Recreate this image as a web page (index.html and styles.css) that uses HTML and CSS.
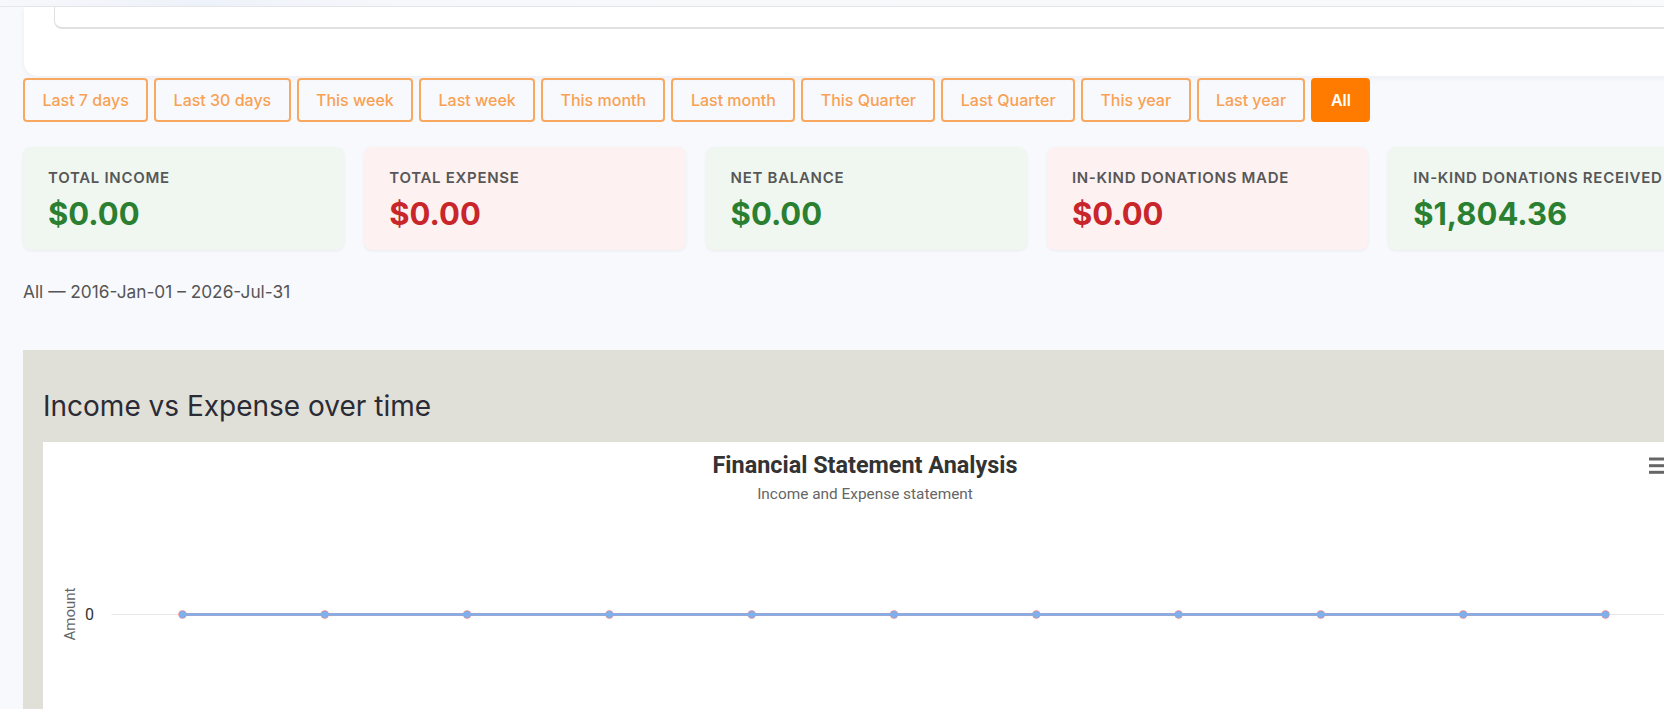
FILE: index.html
```html
<!DOCTYPE html>
<html>
<head>
	<title>Financial Report</title>
	<link rel="stylesheet" href="styles.css">
</head>
<body>
	<div class="topbar"></div>

	<div class="page">
		<div class="filter-card">
			<div class="search-box"></div>
		</div>

		<div class="ranges">
			<button class="range-btn">Last 7 days</button>
			<button class="range-btn">Last 30 days</button>
			<button class="range-btn">This week</button>
			<button class="range-btn">Last week</button>
			<button class="range-btn">This month</button>
			<button class="range-btn">Last month</button>
			<button class="range-btn">This Quarter</button>
			<button class="range-btn">Last Quarter</button>
			<button class="range-btn">This year</button>
			<button class="range-btn">Last year</button>
			<button class="range-btn active">All</button>
		</div>

		<div class="stats">
			<div class="stat income">
				<div class="stat-label">Total Income</div>
				<div class="stat-value">$0.00</div>
			</div>
			<div class="stat expense">
				<div class="stat-label">Total Expense</div>
				<div class="stat-value">$0.00</div>
			</div>
			<div class="stat income">
				<div class="stat-label">Net Balance</div>
				<div class="stat-value">$0.00</div>
			</div>
			<div class="stat expense">
				<div class="stat-label">In-Kind Donations Made</div>
				<div class="stat-value">$0.00</div>
			</div>
			<div class="stat income">
				<div class="stat-label">In-Kind Donations Received</div>
				<div class="stat-value">$1,804.36</div>
			</div>
		</div>

		<p class="range-text">All — 2016-Jan-01 – 2026-Jul-31</p>

		<div class="chart-panel">
			<h2>Income vs Expense over time</h2>
			<div class="chart">
				<svg class="chart-svg" width="1644" height="400" viewBox="0 0 1644 400">
					<text class="chart-title" x="822" y="31" text-anchor="middle">Financial Statement Analysis</text>
					<text class="chart-subtitle" x="822" y="57" text-anchor="middle">Income and Expense statement</text>

					<!-- export menu -->
					<g class="menu-icon">
						<line x1="1606" y1="17" x2="1622" y2="17"/>
						<line x1="1606" y1="23.7" x2="1622" y2="23.7"/>
						<line x1="1606" y1="30.3" x2="1622" y2="30.3"/>
					</g>

					<text class="axis-title" transform="translate(31.5,172) rotate(-90)" text-anchor="middle">Amount</text>
					<text class="axis-label" x="51" y="178" text-anchor="end">0</text>
					<line class="grid" x1="68.5" y1="172.5" x2="1634" y2="172.5"/>

					<!-- expense series -->
					<polyline class="line-expense" points="139.5,172.5 1562.5,172.5"/>
					<g class="dots-expense">
						<circle cx="139.5" cy="172.5" r="4.2"/>
						<circle cx="281.8" cy="172.5" r="4.2"/>
						<circle cx="424.1" cy="172.5" r="4.2"/>
						<circle cx="566.4" cy="172.5" r="4.2"/>
						<circle cx="708.7" cy="172.5" r="4.2"/>
						<circle cx="851" cy="172.5" r="4.2"/>
						<circle cx="993.3" cy="172.5" r="4.2"/>
						<circle cx="1135.6" cy="172.5" r="4.2"/>
						<circle cx="1277.9" cy="172.5" r="4.2"/>
						<circle cx="1420.2" cy="172.5" r="4.2"/>
						<circle cx="1562.5" cy="172.5" r="4.2"/>
					</g>

					<!-- income series -->
					<polyline class="line-income" points="139.5,172.5 1562.5,172.5"/>
					<g class="dots-income">
						<circle cx="139.5" cy="172.5" r="3.5"/>
						<circle cx="281.8" cy="172.5" r="3.5"/>
						<circle cx="424.1" cy="172.5" r="3.5"/>
						<circle cx="566.4" cy="172.5" r="3.5"/>
						<circle cx="708.7" cy="172.5" r="3.5"/>
						<circle cx="851" cy="172.5" r="3.5"/>
						<circle cx="993.3" cy="172.5" r="3.5"/>
						<circle cx="1135.6" cy="172.5" r="3.5"/>
						<circle cx="1277.9" cy="172.5" r="3.5"/>
						<circle cx="1420.2" cy="172.5" r="3.5"/>
						<circle cx="1562.5" cy="172.5" r="3.5"/>
					</g>
				</svg>
			</div>
		</div>
	</div>
</body>
</html>
```

FILE: styles.css
```css
html,
body {
	margin: 0;
	overflow: hidden;
}

body {
	font-family: Inter, "Noto Sans", sans-serif;
	background-color: #f8f9fd;
	color: #333;
}

.topbar {
	height: 6px;
	background: linear-gradient(to right, #f7f8fb, #eef2fa 12%, #f7f8fb 25%, #f9fafc);
	border-bottom: 1px solid #e6e7eb;
}

.page {
	width: 1690px;
	padding-left: 23px;
}

.filter-card {
	height: 69px;
	margin-left: 1px;
	padding: 0 30px;
	box-sizing: border-box;
	background-color: #fff;
	border-radius: 0 0 14px 14px;
	box-shadow: 0 2px 6px rgba(30, 40, 80, 0.05);
}

.search-box {
	height: 20px;
	border: 1px solid #e0e0e0;
	border-top: none;
	border-bottom-width: 2px;
	border-radius: 0 0 8px 8px;
}

.ranges {
	display: flex;
	gap: 6px;
	margin-top: 2px;
}

.range-btn {
	height: 44px;
	padding: 0 17.4px;
	border: 2px solid #f9a95f;
	border-radius: 4px;
	background: transparent;
	color: #f8a154;
	font-family: Inter, sans-serif;
	font-size: 16px;
	font-weight: 500;
	cursor: pointer;
}

.range-btn.active {
	background-color: #ff7b00;
	border-color: #ff7b00;
	color: #fff;
	font-weight: 600;
}

.stats {
	display: grid;
	grid-template-columns: repeat(5, 321.3px);
	gap: 20px;
	margin-top: 25px;
}

.stat {
	height: 103px;
	box-sizing: border-box;
	padding: 22px 25px 0;
	border-radius: 8px;
	box-shadow: 0 1px 3px rgba(0, 0, 0, 0.06);
	white-space: nowrap;
}

.stat.income {
	background-color: #f0f7f1;
}

.stat.expense {
	background-color: #fdf1f1;
}

.stat-label {
	font-size: 15px;
	line-height: 17px;
	font-weight: 600;
	letter-spacing: 0.7px;
	text-transform: uppercase;
	color: #575757;
}

.stat-value {
	margin-top: 9px;
	font-size: 31px;
	line-height: 38px;
	font-weight: 700;
}

.income .stat-value {
	color: #2b7f31;
}

.expense .stat-value {
	color: #c8262a;
}

.range-text {
	margin: 30px 0 0;
	font-size: 17.3px;
	line-height: 24px;
	color: #555;
}

.chart-panel {
	margin-top: 46px;
	padding: 40px 20px 0;
	height: 420px;
	background-color: #e0e0d8;
}

.chart-panel h2 {
	margin: 0;
	font-size: 28px;
	line-height: 1.2;
	font-weight: 400;
	color: #2b2b35;
}

.chart {
	margin-top: 18px;
	height: 400px;
	background-color: #fff;
}

.chart-svg {
	display: block;
	font-family: Roboto, "Liberation Sans", sans-serif;
}

.chart-title {
	font-size: 23.4px;
	font-weight: 700;
	fill: #333;
}

.chart-subtitle {
	font-size: 15.4px;
	fill: #666;
}

.menu-icon line {
	stroke: #666;
	stroke-width: 3;
}

.axis-title {
	font-size: 15px;
	fill: #666;
}

.axis-label {
	font-size: 16px;
	fill: #333;
}

.grid {
	stroke: #e6e6e6;
	stroke-width: 1;
}

.line-expense {
	stroke: #f08a8a;
	stroke-width: 3;
	fill: none;
}

.dots-expense circle {
	fill: #f08a8a;
}

.line-income {
	stroke: #7db0ec;
	stroke-width: 2.4;
	fill: none;
}

.dots-income circle {
	fill: #7db0ec;
}
```
